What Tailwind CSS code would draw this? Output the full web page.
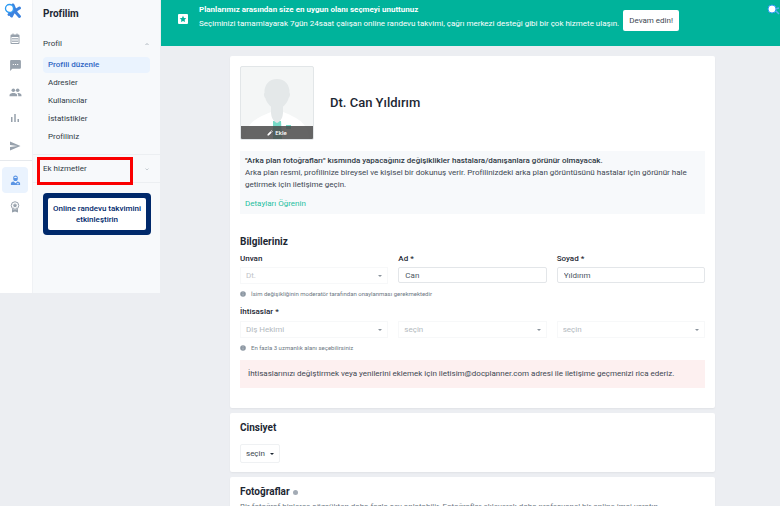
<!DOCTYPE html>
<html lang="tr">
<head>
<meta charset="utf-8">
<meta name="viewport" content="width=device-width, initial-scale=1">
<title>Profilim</title>
<script src="https://cdn.jsdelivr.net/npm/@tailwindcss/browser@4"></script>
</head>
<body class="flex h-screen items-start overflow-hidden bg-[#eceef2] font-[Roboto,sans-serif] text-[8px] leading-3 text-[#3d4752]">

<svg class="hidden">
  <symbol id="logo" viewBox="0 0 18 18">
    <path d="M9 3 L12 10 M15.500 6 L5 12.500 M11 9.500 L15.500 14.500 M9.500 10 L7.500 14" stroke="#3d83df" stroke-width="3" stroke-linecap="round" fill="none"/>
    <circle cx="5.500" cy="6.500" r="4" fill="#fff" stroke="#2b9af3" stroke-width="1.300"/>
  </symbol>
  <symbol id="info" viewBox="0 0 6 6"><circle cx="3" cy="3" r="2.800" fill="#8d98a3"/><path d="M3 2.600v2M3 1.200v.8" stroke="#c6ccd2" stroke-width=".7"/></symbol>
</svg>

<aside class="relative flex h-[293px] w-40 shrink-0 bg-[#f7f9fb]">
  <nav aria-label="Ana menü" class="flex w-8 shrink-0 flex-col bg-white text-[#97a1ac]">
    <a href="#" aria-label="Ana sayfa" class="flex h-[26px] items-start pt-0.5 pl-1"><svg class="size-[18px]"><use href="#logo"/></svg></a>
    <a href="#" aria-label="Takvim" class="flex h-[26px] w-[30px] items-center justify-center">
      <svg class="size-3" viewBox="0 0 24 24" fill="currentColor"><path fill-rule="evenodd" d="M5 3h2V1h2v2h6V1h2v2h2a2 2 0 0 1 2 2v15a2 2 0 0 1-2 2H5a2 2 0 0 1-2-2V5a2 2 0 0 1 2-2zm0 5v12h14V8z"/><path d="M6.500 10h3v3h-3zm4 0h3v3h-3zm4 0h3v3h-3zm-8 5h3v3h-3zm4 0h3v3h-3zm4 0h3v3h-3z"/></svg></a>
    <a href="#" aria-label="Mesajlar" class="flex h-[27px] w-[30px] items-center justify-center">
      <svg class="size-[13px]" viewBox="0 0 24 24" fill="currentColor"><path d="M20 2H4a2 2 0 0 0-2 2v18l4-4h14a2 2 0 0 0 2-2V4a2 2 0 0 0-2-2zM9 11H7V9h2zm4 0h-2V9h2zm4 0h-2V9h2z"/></svg></a>
    <a href="#" aria-label="Hastalar" class="flex h-[26px] w-[30px] items-center justify-center">
      <svg class="size-[13px]" viewBox="0 0 24 24" fill="currentColor"><circle cx="8" cy="8" r="3.300"/><circle cx="16" cy="8" r="3.300"/><path d="M8 13c-2.300 0-7 1.200-7 3.500V19h14v-2.500C15 14.200 10.300 13 8 13zM16 13l-1 .1c1.200.8 2 2 2 3.400V19h6v-2.500c0-2.300-4.700-3.500-7-3.500z"/></svg></a>
    <a href="#" aria-label="İstatistikler" class="flex h-[26px] w-[30px] items-center justify-center">
      <svg class="size-3" viewBox="0 0 24 24" fill="currentColor"><path d="M4 10h3v10H4zM10.500 4h3v16h-3zM17 14h3v6h-3z"/></svg></a>
    <a href="#" aria-label="Kampanyalar" class="flex h-[29px] w-[30px] items-center justify-center">
      <svg class="size-3" viewBox="0 0 24 24" fill="currentColor"><path d="M2 21 23 12 2 3v7l15 2-15 2z"/></svg></a>
    <div class="mb-1.5 border-t border-[#e6e9ed]"></div>
    <a href="#" aria-label="Profilim" class="ml-0.5 flex h-[26px] w-[26px] items-center justify-center rounded-sm bg-[#eaf3fe] text-[#5a94e4]">
      <svg class="size-[11px]" viewBox="0 0 24 24" fill="currentColor"><path d="M12 1c-3 0-5 2-5 5v2c0 3 2 5 5 5s5-2 5-5V6c0-3-2-5-5-5zm0 3c1.800 0 3 .8 3 2.500H9C9 4.800 10.200 4 12 4z"/><path d="M2 22v-4c0-2 3-4 6-4l4 4 4-4c3 0 6 2 6 4v4zm13-4v2h4v-2z" fill-rule="evenodd"/></svg></a>
    <a href="#" aria-label="Sertifikalar" class="flex h-7 w-[30px] items-center justify-center">
      <svg class="size-3" viewBox="0 0 24 24" fill="none" stroke="currentColor" stroke-width="2"><circle cx="12" cy="9" r="7.500"/><path d="m12 4 1.500 3.200 3.500.4-2.600 2.300.8 3.500-3.200-1.800-3.200 1.800.8-3.500L7 7.600l3.500-.4z" fill="currentColor" stroke="none"/><path d="M6 16v7l6-2 6 2v-7l-6 1.500z" fill="currentColor" stroke="none"/></svg></a>
  </nav>

  <div class="flex min-w-0 grow flex-col border-l border-[#f0f2f5] text-[#2f3a45]">
    <h1 class="px-2.5 pt-1.5 text-[10px] leading-4 font-bold text-[#1d2733]">Profilim</h1>
    <button class="mt-4 flex items-center justify-between px-2.5 leading-3">Profil
      <svg class="mr-px size-1" viewBox="0 0 8 8" fill="none" stroke="#9aa4ae" stroke-width="1.500"><path d="m1 6 3-3 3 3"/></svg></button>
    <ul class="mt-[7px] flex flex-col px-2.5 [&_a]:block [&_a]:rounded-sm [&_a]:px-[5px] [&_a]:py-0.5">
      <li class="pb-0.5"><a href="#" aria-current="page" class="bg-[#eaf3fe] font-medium text-[#2f66c4]">Profili düzenle</a></li>
      <li class="pb-0.5"><a href="#">Adresler</a></li>
      <li class="pb-0.5"><a href="#">Kullanıcılar</a></li>
      <li class="pb-0.5"><a href="#">İstatistikler</a></li>
      <li><a href="#">Profiliniz</a></li>
    </ul>
    <button class="mt-[9px] flex h-[29px] items-center justify-between border-y border-[#eceff2] px-2.5">Ek hizmetler
      <svg class="mr-px size-1" viewBox="0 0 8 8" fill="none" stroke="#b4bcc4" stroke-width="1.500"><path d="m1 3 3 3 3-3"/></svg></button>
    <button class="mr-[9px] ml-2.5 mt-2.5 rounded-sm bg-[#00296b] p-[5px]"><span class="block rounded-xs bg-white py-[5px] leading-[11px] font-medium text-[#00296b]">Online randevu takvimini etkinleştirin</span></button>
  </div>
  <div class="pointer-events-none absolute top-[157px] left-[37px] h-7 w-24 border-3 border-[#fa0000]"></div>
</aside>

<div class="ml-px min-w-0 grow">
  <header class="relative flex h-[46px] items-start bg-[#00b39b] pl-[17px] text-white">
    <svg class="mt-3.5 size-2.5 shrink-0" viewBox="0 0 20 20"><rect width="20" height="20" rx="2" fill="#fff"/><path d="m10 3.500 2 4.300 4.600.5-3.400 3.200.9 4.700-4.100-2.300-4.100 2.300.9-4.700-3.400-3.200 4.600-.5z" fill="#00b39b"/></svg>
    <div class="ml-[11px] pt-[3px]">
      <p class="leading-[14px] font-bold">Planlarımız arasından size en uygun olanı seçmeyi unuttunuz</p>
      <p class="leading-[14px]">Seçiminizi tamamlayarak 7gün 24saat çalışan online randevu takvimi, çağrı merkezi desteği gibi bir çok hizmete ulaşın.</p>
    </div>
    <button class="mt-2.5 ml-1 h-[21px] shrink-0 rounded-xs bg-white px-1.5 text-[#3d4752]">Devam edin!</button>
    <svg class="absolute top-1 right-0 h-3 w-[13px]" viewBox="0 0 13 12"><path d="m8 5 4-1M8 6l4 4" stroke="#5cb0ee" stroke-width="1.500"/><circle cx="5" cy="5" r="4" fill="#fff" stroke="#2b9af3"/></svg>
  </header>

  <main class="flex flex-col gap-[5px] pt-2.5 pr-[65px] pl-[69px]">
    <section class="rounded-xs bg-white px-2.5 pt-2.5 pb-5 shadow-xs shadow-black/5">
      <div class="flex items-center gap-4">
        <div class="relative h-[74px] w-[74px] overflow-hidden rounded-xs border border-[#e2e6e8] bg-[#f4f6f6]">
          <svg class="block size-[72px]" viewBox="0 0 72 72"><path d="M4 72c1-14 8-20 26-27h12c18 7 25 13 26 27z" fill="#fff"/><path d="M32 54h8l1 18h-9z" fill="#76dac7"/><path d="M45 58h5v4h-5z" fill="#76dac7"/><path d="M30 38h12v7c0 5-2 9-6 11-4-2-6-6-6-11z" fill="#e4e8e9"/><path d="M36 12c8 0 13 6 12.500 14 1 .5.500 4-.8 5C46 37 41 42 36 42s-10-5-11.700-11c-1.300-1-1.800-4.500-.8-5C23 18 28 12 36 12z" fill="#e4e8e9"/></svg>
          <button class="absolute inset-x-0 bottom-0 flex h-[13px] items-center justify-center gap-0.5 bg-[#4a4a4a]/85 text-[6px] font-medium text-white"><svg class="size-1.5" viewBox="0 0 24 24" fill="#fff"><path d="M2 17v5h5L19 10l-5-5zM21 8l2-2-5-5-2 2z"/></svg>Ekle</button>
        </div>
        <h2 class="text-[13px] leading-4 font-medium text-[#1d2733]">Dt. Can Yıldırım</h2>
      </div>

      <div class="mt-[11px] bg-[#f7f9fb] px-[5px] pt-1 pb-1">
        <p class="font-medium text-[#2f3a45]">"Arka plan fotoğrafları" kısmında yapacağınız değişiklikler hastalara/danışanlara görünür olmayacak.</p>
        <p class="leading-3">Arka plan resmi, profilinize bireysel ve kişisel bir dokunuş verir. Profilinizdeki arka plan görüntüsünü hastalar için görünür hale getirmek için iletişime geçin.</p>
        <a href="#" class="mt-[7px] block text-[#1fbfa0]">Detayları Öğrenin</a>
      </div>

      <h2 class="mt-5 text-[10px] leading-4 font-bold text-[#1d2733]">Bilgileriniz</h2>
      <div class="mt-[3px] grid grid-cols-3 gap-x-2.5">
        <div>
          <label for="unvan" class="block font-medium text-[#1d2733]">Unvan</label>
          <div class="relative mt-0.5"><select id="unvan" disabled class="block h-[17px] w-full appearance-none border border-[#f7f8f9] px-[5px] leading-3 text-[#bfc4c8]"><option>Dt.</option></select>
            <svg class="absolute top-2 right-1.5 h-0.5 w-1" viewBox="0 0 4 2"><path d="M0 0h4L2 2z" fill="#8b949d"/></svg></div>
        </div>
        <div>
          <label for="ad" class="block font-medium text-[#1d2733]">Ad *</label>
          <input id="ad" value="Can" class="mt-0.5 block h-4 w-full rounded-xs border border-[#e3e6e9] px-1.5 leading-3 text-[#4b555f]">
        </div>
        <div>
          <label for="soyad" class="block font-medium text-[#1d2733]">Soyad *</label>
          <input id="soyad" value="Yıldırım" class="mt-0.5 block h-4 w-full rounded-xs border border-[#e3e6e9] px-1.5 leading-3 text-[#4b555f]">
        </div>
      </div>
      <p class="mt-1 flex items-center gap-[5px] text-[6px] text-[#6d7883]"><svg class="size-1.5"><use href="#info"/></svg>İsim değişikliğinin moderatör tarafından onaylanması gerekmektedir</p>

      <fieldset class="mt-1.5">
        <legend class="font-medium text-[#1d2733]">İhtisaslar *</legend>
        <div class="mt-[3px] grid grid-cols-3 gap-x-2.5">
          <div class="relative"><select aria-label="İhtisas 1" disabled class="block h-[17px] w-full appearance-none border border-[#f7f8f9] px-[5px] leading-3 text-[#b3b9be]"><option>Diş Hekimi</option></select>
            <svg class="absolute top-2 right-1.5 h-0.5 w-1" viewBox="0 0 4 2"><path d="M0 0h4L2 2z" fill="#8b949d"/></svg></div>
          <div class="relative"><select aria-label="İhtisas 2" disabled class="block h-[17px] w-full appearance-none border border-[#f7f8f9] px-[5px] leading-3 text-[#b3b9be]"><option>seçin</option></select>
            <svg class="absolute top-2 right-1.5 h-0.5 w-1" viewBox="0 0 4 2"><path d="M0 0h4L2 2z" fill="#8b949d"/></svg></div>
          <div class="relative"><select aria-label="İhtisas 3" disabled class="block h-[17px] w-full appearance-none border border-[#f7f8f9] px-[5px] leading-3 text-[#b3b9be]"><option>seçin</option></select>
            <svg class="absolute top-2 right-1.5 h-0.5 w-1" viewBox="0 0 4 2"><path d="M0 0h4L2 2z" fill="#8b949d"/></svg></div>
        </div>
      </fieldset>
      <p class="mt-1 flex items-center gap-[5px] text-[6px] text-[#6d7883]"><svg class="size-1.5"><use href="#info"/></svg>En fazla 3 uzmanlık alanı seçebilirsiniz</p>
      <p class="mt-1.5 bg-[#fdf0f0] p-2">İhtisaslarınızı değiştirmek veya yenilerini eklemek için iletisim@docplanner.com adresi ile iletişime geçmenizi rica ederiz.</p>
    </section>

    <section class="rounded-xs bg-white px-2.5 pt-[7px] pb-[9px] shadow-xs shadow-black/5">
      <h2 class="text-[10px] leading-4 font-bold text-[#1d2733]">Cinsiyet</h2>
      <div class="relative mt-2 w-10"><select aria-label="Cinsiyet" class="block h-[19px] w-full appearance-none rounded-xs border border-[#eff1f3] px-[5px] leading-3"><option>seçin</option></select>
        <svg class="pointer-events-none absolute top-[9px] right-1.5 h-0.5 w-1" viewBox="0 0 4 2"><path d="M0 0h4L2 2z" fill="#1d2733"/></svg></div>
    </section>

    <section class="rounded-xs bg-white px-2.5 pt-[7px] pb-5 shadow-xs shadow-black/5">
      <h2 class="flex items-center gap-[3px] text-[10px] leading-4 font-bold text-[#1d2733]">Fotoğraflar<svg class="size-[5px]" viewBox="0 0 6 6"><circle cx="3" cy="3" r="3" fill="#a3abb5"/></svg></h2>
      <p class="mt-px text-[#6d7883]">Bir fotoğraf binlerce sözcükten daha fazla şey anlatabilir. Fotoğraflar ekleyerek daha profesyonel bir online imaj yaratın.</p>
    </section>
  </main>
</div>
</body>
</html>
